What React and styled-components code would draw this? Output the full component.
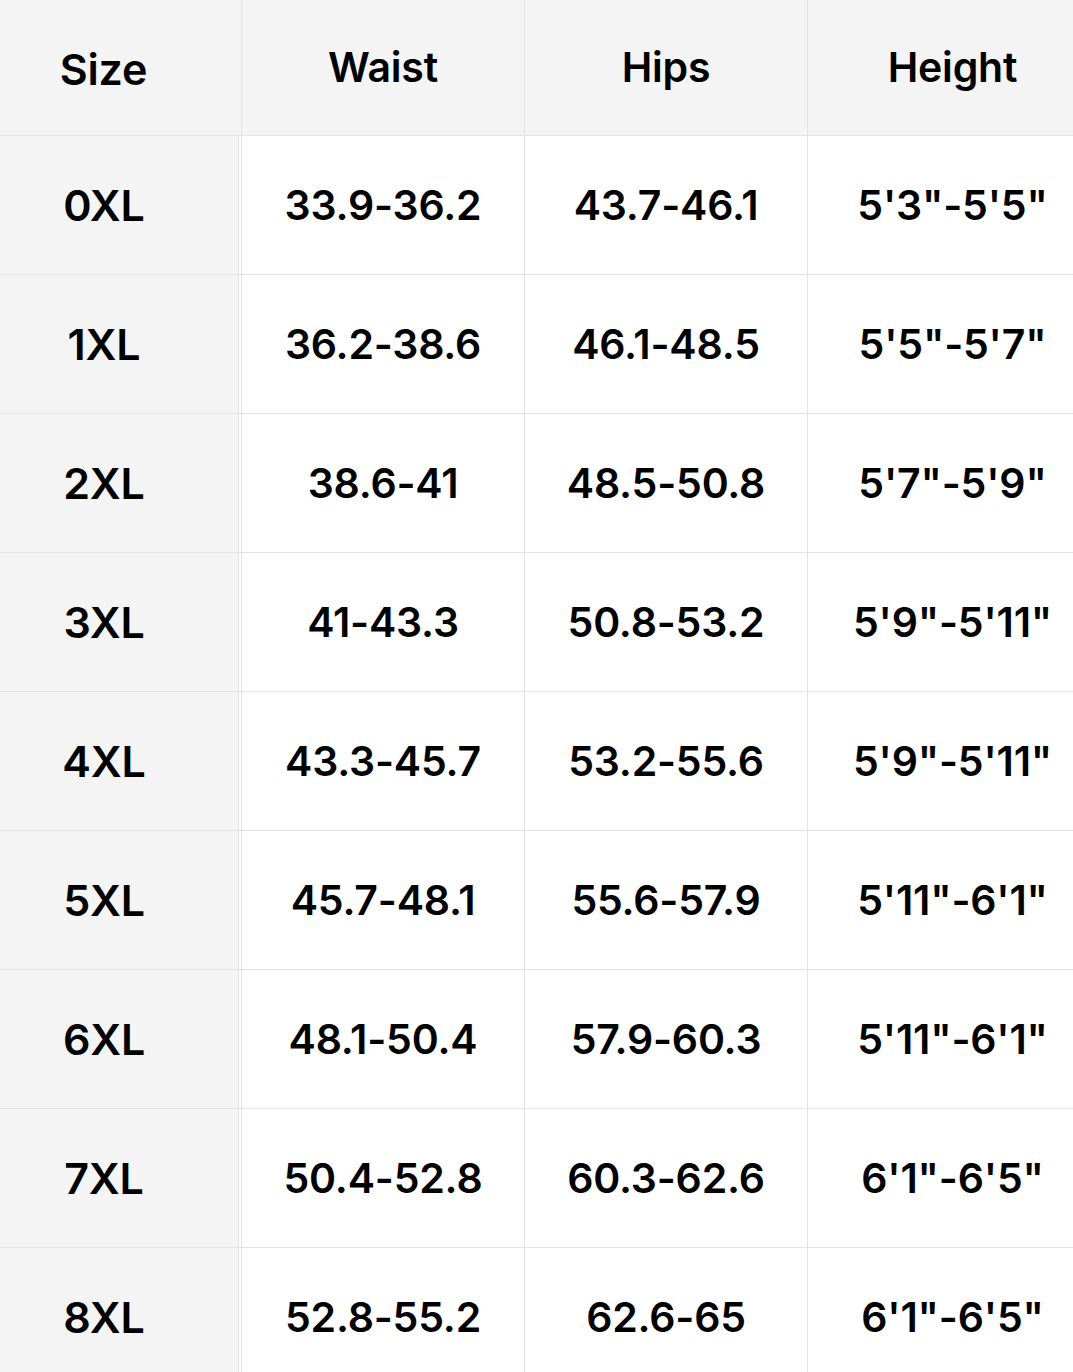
import React from 'react'
import styled, { createGlobalStyle } from 'styled-components'

const rows = [
    ['0XL', '33.9-36.2', '43.7-46.1', `5'3"-5'5"`],
    ['1XL', '36.2-38.6', '46.1-48.5', `5'5"-5'7"`],
    ['2XL', '38.6-41', '48.5-50.8', `5'7"-5'9"`],
    ['3XL', '41-43.3', '50.8-53.2', `5'9"-5'11"`],
    ['4XL', '43.3-45.7', '53.2-55.6', `5'9"-5'11"`],
    ['5XL', '45.7-48.1', '55.6-57.9', `5'11"-6'1"`],
    ['6XL', '48.1-50.4', '57.9-60.3', `5'11"-6'1"`],
    ['7XL', '50.4-52.8', '60.3-62.6', `6'1"-6'5"`],
    ['8XL', '52.8-55.2', '62.6-65', `6'1"-6'5"`],
]

function App() {
    return (
        <>
            <GlobalStyle />
            <Table>
                <HeadRow>
                    <SizeHead>Size</SizeHead>
                    <HeadCell>Waist</HeadCell>
                    <HeadCell>Hips</HeadCell>
                    <HeadCell wide>Height</HeadCell>
                </HeadRow>
                {rows.map(([size, waist, hips, height]) => (
                    <Row key={size}>
                        <SizeCell>{size}</SizeCell>
                        <Cell>{waist}</Cell>
                        <Cell>{hips}</Cell>
                        <Cell wide>{height}</Cell>
                    </Row>
                ))}
            </Table>
        </>
    )
}

export default App

const GlobalStyle = createGlobalStyle`
body {
margin: 0;
background: #ffffff;
overflow: hidden;
font-family: Inter, "Noto Sans", sans-serif;
}
`

const Table = styled.div`
display: flex;
flex-direction: column;
width: 1100px;
color: #000;
`

const HeadRow = styled.div`
display: flex;
height: 135px;
background-color: #f4f4f4;
border-bottom: 1px solid #e4e4e4;
`

const Row = styled.div`
display: flex;
height: 138px;
background-color: #ffffff;
border-bottom: 1px solid #e4e4e4;
`

const BaseCell = styled.div`
display: flex;
align-items: center;
justify-content: center;
font-size: 41px;
font-weight: 600;
letter-spacing: -0.2px;
box-sizing: border-box;
`

const SizeHead = styled(BaseCell)`
width: 241px;
padding-right: 34px;
padding-top: 2px;
font-size: 43px;
`

const HeadCell = styled(BaseCell)`
width: ${p => (p.wide ? '290px' : '283px')};
border-left: 1px solid #e4e4e4;
padding-bottom: 2px;
`

const SizeCell = styled(BaseCell)`
width: 239px;
margin-right: 2px;
padding-right: 30px;
font-size: 43px;
background-color: #f4f4f4;
border-right: 1px solid #e4e4e4;
`

const Cell = styled(BaseCell)`
width: ${p => (p.wide ? '290px' : '283px')};
border-left: 1px solid #e4e4e4;
`
